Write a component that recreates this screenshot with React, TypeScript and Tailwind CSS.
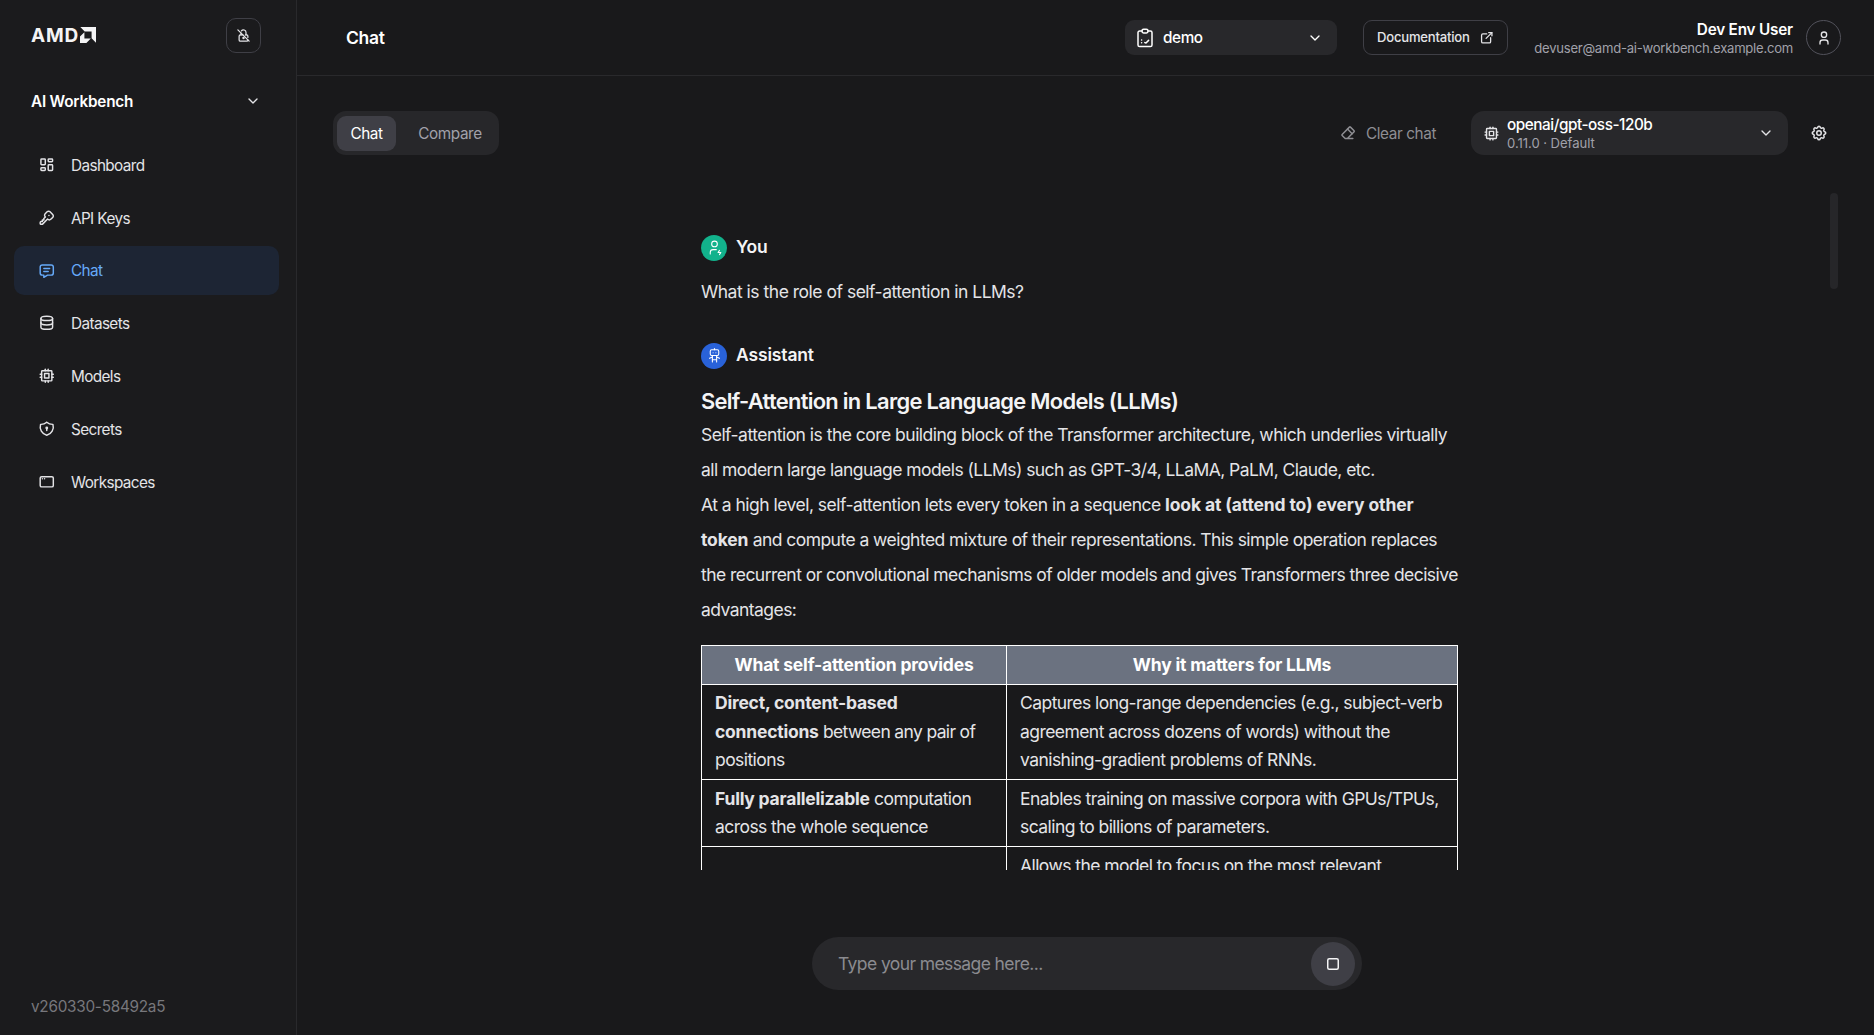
import type { ReactNode } from "react";
import type { IconType } from "react-icons";
import {
  TbAppWindow,
  TbChevronDown,
  TbCpu,
  TbDatabase,
  TbEraser,
  TbExternalLink,
  TbKey,
  TbLayoutDashboard,
  TbLockOff,
  TbMessage,
  TbRobot,
  TbSettings,
  TbShieldLock,
  TbUser,
  TbUserBolt,
} from "react-icons/tb";

const NAV: { label: string; icon: IconType; active?: boolean }[] = [
  { label: "Dashboard", icon: TbLayoutDashboard },
  { label: "API Keys", icon: TbKey },
  { label: "Chat", icon: TbMessage, active: true },
  { label: "Datasets", icon: TbDatabase },
  { label: "Models", icon: TbCpu },
  { label: "Secrets", icon: TbShieldLock },
  { label: "Workspaces", icon: TbAppWindow },
];

function Logo() {
  return (
    <div className="flex items-center gap-[1px] pb-px text-[#f4f4f5]">
      <span className="text-[19px] leading-none font-bold tracking-[0.8px]">AMD</span>
      <svg viewBox="0 0 16 16" className="size-4" fill="currentColor">
        <path d="M0.3 0H16v15.7l-4.4-4.4V4.4H4.7z" />
        <path d="M4.4 5.2v6.4h6.4L6.4 16H0V9.6z" />
      </svg>
    </div>
  );
}

function ClipboardIcon() {
  return (
    <svg
      viewBox="0 0 18 20"
      className="h-5 w-[18px]"
      fill="none"
      stroke="currentColor"
      strokeWidth="1.5"
      strokeLinecap="round"
      strokeLinejoin="round"
    >
      <path d="M6 3H3.6A1.6 1.6 0 0 0 2 4.6V17a1.6 1.6 0 0 0 1.6 1.6h10.8A1.6 1.6 0 0 0 16 17V4.6A1.6 1.6 0 0 0 14.4 3H12" />
      <rect x="6" y="1.3" width="6" height="3.6" rx="1.6" />
      <path d="M5.6 12h.01M5.6 14.8h.01M8.8 14.6l1.2.4 2.6-2.6" />
    </svg>
  );
}

function Sidebar() {
  return (
    <aside className="flex h-full w-[297px] shrink-0 flex-col border-r border-[#29292c] bg-[#1b1b1d]">
      <div className="flex h-[71px] items-center justify-between pr-[35px] pl-[31px]">
        <Logo />
        <button className="flex size-[35px] items-center justify-center rounded-[10px] border border-[#3f3f46]">
          <TbLockOff className="size-[15px]" />
        </button>
      </div>
      <div className="mt-[14px] flex h-8 items-center justify-between pr-[35px] pl-[31px]">
        <span className="pt-[2px] text-[15.3px] font-semibold tracking-[-0.2px] text-white">AI Workbench</span>
        <TbChevronDown className="size-4" />
      </div>
      <nav className="mt-[23.5px] flex flex-col gap-[4.2px] pr-[17px] pl-[14px]">
        {NAV.map(({ label, icon: Icon, active }) => (
          <a
            key={label}
            className={`flex h-[48.6px] items-center gap-[15.5px] rounded-[10px] pl-[24px] text-[15.3px] tracking-[-0.6px] ${
              active ? "bg-[#1d2534] text-[#66aaf9]" : "text-[#e4e4e7]"
            }`}
          >
            <Icon className="size-[17.5px]" />
            <span className="pt-[3px]">{label}</span>
          </a>
        ))}
      </nav>
      <div className="mt-auto pb-[16px] pl-[31px] text-[15.3px] tracking-[-0.25px] text-[#77777c]">
        v260330-58492a5
      </div>
    </aside>
  );
}

function Header() {
  return (
    <header className="flex h-[76px] shrink-0 items-center border-b border-[#29292c] pr-[33px] pl-[49px]">
      <h1 className="pt-[1px] text-[17.5px] font-semibold tracking-[-0.3px] text-white">Chat</h1>
      <button className="ml-auto flex h-[35px] w-[212px] items-center gap-[9px] rounded-[9px] bg-[#28282b] pr-[14px] pl-[11px] text-[15.3px] font-medium tracking-[-0.4px] text-white">
        <ClipboardIcon />
        <span className="pt-[1px]">demo</span>
        <TbChevronDown className="ml-auto size-4" />
      </button>
      <button className="ml-[26px] flex h-[35px] w-[145px] items-center justify-between rounded-[9px] border border-[#3f3f46] px-[13px] text-[13.1px] font-medium tracking-[-0.22px]">
        Documentation
        <TbExternalLink className="size-[15.5px]" />
      </button>
      <div className="ml-[26px] flex w-[259px] flex-col items-end whitespace-nowrap">
        <span className="pt-px text-[15.3px] leading-[19px] font-semibold tracking-[-0.2px] text-white">
          Dev Env User
        </span>
        <span className="text-[13.1px] leading-[18px] tracking-[-0.25px] text-[#a1a1aa]">
          devuser@amd-ai-workbench.example.com
        </span>
      </div>
      <div className="ml-[13px] flex size-[35px] items-center justify-center rounded-full border border-[#52525b]">
        <TbUser className="size-4" />
      </div>
    </header>
  );
}

function Toolbar() {
  return (
    <div className="flex h-[44px] shrink-0 items-center pr-[46px] pl-[36px]">
      <div className="flex h-full w-[166px] items-center rounded-[13px] bg-[#27272a] pl-[4px] text-[15.3px] tracking-[-0.4px]">
        <button className="h-[35px] w-[59px] rounded-[9px] bg-[#3f3f46] pt-[2px] text-white">Chat</button>
        <button className="ml-[5px] h-[35px] w-[98px] pt-[2px] text-[#a1a1aa]">Compare</button>
      </div>
      <button className="ml-auto flex items-center gap-[10px] text-[15.3px] tracking-[-0.4px] text-[#8e8e93]">
        <TbEraser className="size-[17.5px]" />
        <span className="pt-[2px]">Clear chat</span>
      </button>
      <button className="ml-[35px] flex h-full w-[317px] items-center rounded-[13px] bg-[#28282b] pr-[14px] pl-[12px] text-left">
        <TbCpu className="size-[17px]" />
        <span className="ml-[7px] flex flex-col">
          <span className="text-[15.3px] leading-[19px] font-medium tracking-[-0.45px] text-white">
            openai/gpt-oss-120b
          </span>
          <span className="text-[13.1px] leading-[18px] tracking-[-0.05px] text-[#a1a1aa]">0.11.0 · Default</span>
        </span>
        <TbChevronDown className="ml-auto size-4" />
      </button>
      <button className="ml-[22px]">
        <TbSettings className="size-[18px]" />
      </button>
    </div>
  );
}

function Author({ name, color, children }: { name: string; color: string; children: ReactNode }) {
  return (
    <div className="flex h-[27px] items-center gap-[9px]">
      <div className={`flex size-[26px] items-center justify-center rounded-full text-white ${color}`}>{children}</div>
      <span className="text-[17.5px] font-semibold tracking-[-0.15px] text-[#f4f4f5]">{name}</span>
    </div>
  );
}

function AnswerTable() {
  return (
    <table className="mt-[17.5px] w-[757px] table-fixed border-collapse text-left leading-[28.4px] tracking-[-0.56px]">
      <colgroup>
        <col className="w-[305px]" />
        <col />
      </colgroup>
      <thead>
        <tr className="bg-[#6b7280] text-center tracking-[-0.2px] text-white">
          <th className="border border-white px-[13px] py-[5px] font-bold">What self-attention provides</th>
          <th className="border border-white px-[13px] py-[5px] font-bold">Why it matters for LLMs</th>
        </tr>
      </thead>
      <tbody>
        <tr>
          <td className="border border-white px-[13px] pt-[4.2px] pb-[5px]">
            <strong className="tracking-[-0.22px]">
              Direct, content-based
              <br />
              connections
            </strong>
            <span className="tracking-[-0.65px]"> between any pair of</span>
            <br />
            positions
          </td>
          <td className="border border-white px-[13px] pt-[4.2px] pb-[5px] whitespace-nowrap">
            Captures long-range dependencies (e.g., subject-verb
            <br />
            agreement across dozens of words) without the
            <br />
            vanishing-gradient problems of RNNs.
          </td>
        </tr>
        <tr>
          <td className="border border-white px-[13px] py-[4.6px]">
            <strong className="tracking-[-0.22px]">Fully parallelizable</strong> computation
            <br />
            across the whole sequence
          </td>
          <td className="border border-white px-[13px] py-[4.6px] whitespace-nowrap">
            Enables training on massive corpora with GPUs/TPUs,
            <br />
            scaling to billions of parameters.
          </td>
        </tr>
        <tr>
          <td className="h-[95px] border border-white" />
          <td className="h-[95px] border border-white px-[13px] py-[5px] align-top whitespace-nowrap">
            Allows the model to focus on the most relevant
          </td>
        </tr>
      </tbody>
    </table>
  );
}

function Conversation() {
  return (
    <div className="mt-[38px] flex h-[677px] shrink-0 justify-between overflow-hidden pr-[36px] pl-[404px]">
      <div className="w-[758px] pt-[41px] text-[17.5px] tracking-[-0.55px] text-[#e4e4e7]">
        <Author name="You" color="bg-[#12b28c]">
          <TbUserBolt className="size-[17px]" strokeWidth={1.5} />
        </Author>
        <p className="mt-[13px] leading-[35px] tracking-[-0.49px]">What is the role of self-attention in LLMs?</p>
        <div className="mt-[33px]">
          <Author name="Assistant" color="bg-[#2962d9]">
            <TbRobot className="size-[17px]" strokeWidth={1.5} />
          </Author>
        </div>
        <h2 className="mt-[16px] text-[21.9px] leading-[32px] font-semibold tracking-[-0.7px] text-[#f4f4f5]">
          Self-Attention in Large Language Models (LLMs)
        </h2>
        <p className="leading-[35px] whitespace-nowrap">
          <span className="tracking-[-0.52px]">
            Self-attention is the core building block of the Transformer architecture, which underlies virtually
          </span>
          <br />
          all modern large language models (LLMs) such as GPT-3/4, LLaMA, PaLM, Claude, etc.
        </p>
        <p className="leading-[35px] whitespace-nowrap">
          <span className="tracking-[-0.52px]">At a high level, self-attention lets every token in a sequence </span>
          <strong className="tracking-[-0.13px]">look at (attend to) every other</strong>
          <br />
          <strong className="tracking-[-0.15px]">token</strong> and compute a weighted mixture of their representations.
          This simple operation replaces
          <br />
          the recurrent or convolutional mechanisms of older models and gives Transformers three decisive
          <br />
          advantages:
        </p>
        <AnswerTable />
      </div>
      <div className="h-[96px] w-[8px] rounded-full bg-[#262629]" />
    </div>
  );
}

export default function App() {
  return (
    <div className="flex h-[1035px] w-[1874px] overflow-hidden bg-[#19191b] font-[Inter,sans-serif] text-[#e4e4e7]">
      <Sidebar />
      <main className="flex flex-1 flex-col">
        <Header />
        <div className="h-[35px] shrink-0" />
        <Toolbar />
        <Conversation />
        <div className="mt-[67px] ml-[515px] flex h-[53px] w-[550px] shrink-0 items-center justify-between rounded-full bg-[#28282b] pr-[7px] pl-[26px]">
          <span className="pt-[2px] text-[17.5px] tracking-[-0.6px] text-[#8b8b90]">Type your message here...</span>
          <button className="flex size-[44px] items-center justify-center rounded-full bg-[#3f3f46]">
            <svg viewBox="0 0 12 12" className="size-3" fill="none" stroke="#f4f4f5" strokeWidth="1.5">
              <rect x="0.75" y="0.75" width="10.5" height="10.5" rx="1.5" />
            </svg>
          </button>
        </div>
      </main>
    </div>
  );
}
